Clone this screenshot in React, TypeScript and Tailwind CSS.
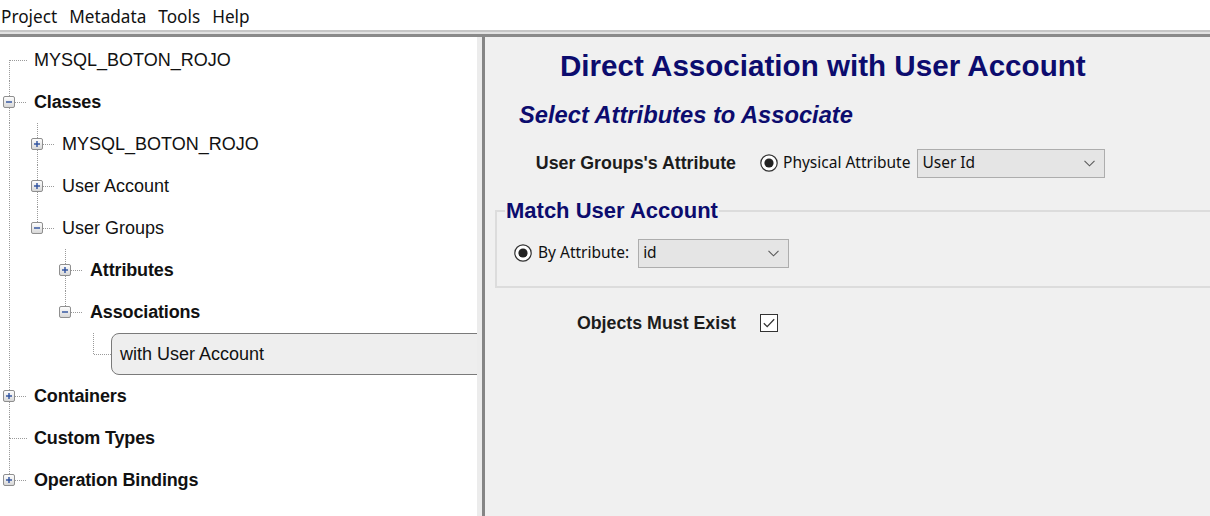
import React from 'react';

type Node = {
  label: string;
  level: number;
  bold?: boolean;
  expander?: 'plus' | 'minus';
  first?: boolean;
  last?: boolean;
  rails: boolean[];
  selected?: boolean;
};

const rows: Node[] = [
  { label: 'MYSQL_BOTON_ROJO', level: 0, first: true, rails: [] },
  { label: 'Classes', level: 0, bold: true, expander: 'minus', rails: [] },
  { label: 'MYSQL_BOTON_ROJO', level: 1, expander: 'plus', rails: [true] },
  { label: 'User Account', level: 1, expander: 'plus', rails: [true] },
  { label: 'User Groups', level: 1, expander: 'minus', last: true, rails: [true] },
  { label: 'Attributes', level: 2, bold: true, expander: 'plus', rails: [true, false] },
  { label: 'Associations', level: 2, bold: true, expander: 'minus', last: true, rails: [true, false] },
  { label: 'with User Account', level: 3, last: true, selected: true, rails: [true, false, false] },
  { label: 'Containers', level: 0, bold: true, expander: 'plus', rails: [] },
  { label: 'Custom Types', level: 0, bold: true, rails: [] },
  { label: 'Operation Bindings', level: 0, bold: true, expander: 'plus', last: true, rails: [] },
];

const dot = { stroke: '#9a9a9a', strokeWidth: 1, strokeDasharray: '1 1' };

function Rail() {
  return (
    <svg width="28" height="42" className="shrink-0">
      <line x1="9.5" y1="0" x2="9.5" y2="42" {...dot} />
    </svg>
  );
}

function Connector({ n }: { n: Node }) {
  return (
    <svg width={n.level === 3 ? 27 : 28} height="42" className="shrink-0">
      {!n.first && <line x1="9.5" y1="0" x2="9.5" y2="21" {...dot} />}
      {!n.last && <line x1="9.5" y1="21" x2="9.5" y2="42" {...dot} />}
      <line x1={n.expander ? 15 : 10} y1="21.5" x2="27" y2="21.5" {...dot} />
      {n.expander && (
        <g>
          <defs>
            <linearGradient id="exp" x1="0" y1="0" x2="0" y2="1">
              <stop offset="0" stopColor="#ffffff" />
              <stop offset="1" stopColor="#d6d6d6" />
            </linearGradient>
          </defs>
          <rect x="3.5" y="15.5" width="11" height="11" rx="1.5" fill="url(#exp)" stroke="#8f8f8f" />
          <line x1="6" y1="21" x2="12" y2="21" stroke="#2c4f9e" strokeWidth="1.4" />
          {n.expander === 'plus' && <line x1="9" y1="18" x2="9" y2="24" stroke="#2c4f9e" strokeWidth="1.4" />}
        </g>
      )}
    </svg>
  );
}

function TreeRow({ n }: { n: Node }) {
  return (
    <div className="flex h-[42px] items-center">
      {n.rails.map((r, i) => (r ? <Rail key={i} /> : <div key={i} className="w-[28px] shrink-0" />))}
      <Connector n={n} />
      {n.selected ? (
        <div className="flex h-[42px] flex-1 items-center rounded-[8px] border border-[#7a7a7a] bg-[#eeeeee] pl-[8px] -mr-[12px]">
          {n.label}
        </div>
      ) : (
        <span className={`ml-[6px] whitespace-nowrap ${n.bold ? 'font-bold tracking-[-0.15px]' : ''}`}>{n.label}</span>
      )}
    </div>
  );
}

function Radio() {
  return (
    <svg width="18" height="18" viewBox="0 0 18 18" className="shrink-0">
      <circle cx="9" cy="9" r="8.2" fill="#ffffff" stroke="#333333" strokeWidth="1.2" />
      <circle cx="9" cy="9" r="4.6" fill="#222222" />
    </svg>
  );
}

function Combo({ value, width }: { value: string; width: string }) {
  return (
    <div className={`flex h-[29px] ${width} items-center justify-between border border-[#adadad] bg-[#e5e5e5] pl-[4px] pr-[9px]`}>
      <span>{value}</span>
      <svg width="11" height="7" viewBox="0 0 11 7">
        <polyline points="0.5,0.8 5.5,5.8 10.5,0.8" fill="none" stroke="#5a5a5a" strokeWidth="1.1" />
      </svg>
    </div>
  );
}

export default function App() {
  return (
    <div className="flex h-[516px] w-[1210px] flex-col overflow-hidden bg-white font-['Liberation_Sans',Arial,sans-serif] text-[#111]">
      <div className="flex h-[30px] items-end gap-[12px] pl-[1px] font-['Noto_Sans',sans-serif] text-[17.2px] leading-[26px] text-[#111]">
        <span>Project</span>
        <span>Metadata</span>
        <span>Tools</span>
        <span>Help</span>
      </div>
      <div className="h-[2px] bg-[#c6c6c6]" />
      <div className="h-[2px] bg-[#e2e2e2]" />
      <div className="h-[3px] bg-[#8a8a8a]" />

      <div className="flex min-h-0 flex-1">
        <div className="w-[477px] shrink-0 overflow-hidden bg-white pt-[2px] text-[18px]">
          {rows.map((n, i) => (
            <TreeRow key={i} n={n} />
          ))}
        </div>
        <div className="w-[5px] shrink-0 bg-[#ececec]" />
        <div className="w-[3px] shrink-0 bg-[#858585]" />

        <div className="flex flex-1 flex-col overflow-hidden bg-[#f0f0f0]">
          <div className="flex h-[58px] items-center pl-[75px] text-[29.6px] font-bold text-[#0c0c6e]">
            Direct Association with User Account
          </div>
          <div className="flex h-[42px] items-center pl-[34px] text-[23.7px] font-bold italic text-[#0c0c6e]">
            Select Attributes to Associate
          </div>
          <div className="flex h-[52px] items-center">
            <div className="w-[251px] shrink-0 pt-[1px] text-right text-[17.8px] font-bold text-[#1c1c1c]">User Groups's Attribute</div>
            <div className="ml-[24px] flex items-center font-['Noto_Sans',sans-serif] text-[15.5px] text-[#111]">
              <Radio />
              <span className="ml-[5px]">Physical Attribute</span>
              <div className="ml-[7px]">
                <Combo value="User Id" width="w-[188px]" />
              </div>
            </div>
          </div>

          <fieldset className="mt-[9px] ml-[10px] -mr-[20px] border-2 border-[#dcdcdc] pb-[18px] pl-[8px] pt-[14px]">
            <legend className="px-[1px] text-[22px] font-bold leading-[26px] text-[#0c0c6e]">Match User Account</legend>
            <div className="flex h-[30px] items-center pl-[9px] font-['Noto_Sans',sans-serif] text-[15.5px] text-[#111]">
              <Radio />
              <span className="ml-[6px]">By Attribute:</span>
              <div className="ml-[9px]">
                <Combo value="id" width="w-[151px]" />
              </div>
            </div>
          </fieldset>

          <div className="mt-[20px] flex h-[30px] items-center">
            <div className="w-[251px] shrink-0 text-right text-[17.8px] font-bold text-[#1c1c1c]">Objects Must Exist</div>
            <svg width="18" height="18" viewBox="0 0 18 18" className="ml-[24px] shrink-0">
              <rect x="0.5" y="0.5" width="17" height="17" fill="#ffffff" stroke="#333333" />
              <polyline points="3.8,9.2 7.2,12.6 14.2,5.2" fill="none" stroke="#333333" strokeWidth="1.3" />
            </svg>
          </div>
        </div>
      </div>
    </div>
  );
}
